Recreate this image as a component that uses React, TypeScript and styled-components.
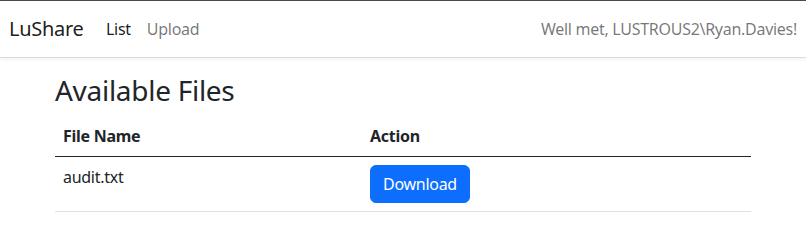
import React from "react";
import styled, { createGlobalStyle } from "styled-components";

const Global = createGlobalStyle`
  html, body { margin: 0; padding: 0; background: #fff; }
  body {
    font-family: "Noto Sans", "Open Sans", sans-serif;
    font-size: 16px;
    line-height: 1.5;
    color: #212529;
    letter-spacing: -0.28px;
    border-top: 1px solid #4a4a4a;
  }
  * { box-sizing: border-box; }
`;

const Navbar = styled.nav`
  display: flex;
  align-items: center;
  height: 57px;
  padding: 0 9px;
  border-bottom: 1px solid #dcdcdc;
  box-shadow: 0 2px 4px rgba(0, 0, 0, 0.05);
`;

const Brand = styled.a`
  width: 97px;
  font-size: 20px;
  color: rgba(0, 0, 0, 0.9);
  text-decoration: none;
`;

const NavLinks = styled.div`
  display: flex;
  gap: 16px;
  flex: 1;
`;

const NavLink = styled.a<{ $active?: boolean }>`
  font-size: 16px;
  color: ${(p) => (p.$active ? "rgba(0,0,0,0.9)" : "rgba(0,0,0,0.55)")};
  text-decoration: none;
`;

const Greeting = styled.span`
  color: rgba(0, 0, 0, 0.55);
  font-size: 16px;
`;

const Container = styled.main`
  width: 696px;
  margin: 16px 0 0 55px;
`;

const Heading = styled.h2`
  margin: 0 0 8px;
  font-weight: 400;
  font-size: 28px;
  line-height: 1.2;
`;

const Table = styled.table`
  width: 100%;
  border-collapse: collapse;
`;

const Th = styled.th<{ $w?: number }>`
  text-align: left;
  font-weight: 700;
  padding: 8px;
  border-bottom: 1px solid #212529;
  width: ${(p) => (p.$w ? `${p.$w}px` : "auto")};
`;

const Td = styled.td`
  padding: 8px;
  vertical-align: top;
  border-bottom: 1px solid #dee2e6;
`;

const Button = styled.button`
  font-family: inherit;
  font-size: 16px;
  letter-spacing: -0.28px;
  line-height: 1.5;
  color: #fff;
  background: #0d6efd;
  border: 1px solid #0d6efd;
  border-radius: 6px;
  padding: 6px 12px;
  cursor: pointer;
`;

export default function App() {
  return (
    <>
      <Global />
      <Navbar>
        <Brand href="#">LuShare</Brand>
        <NavLinks>
          <NavLink $active href="#">List</NavLink>
          <NavLink href="#">Upload</NavLink>
        </NavLinks>
        <Greeting>Well met, LUSTROUS2\Ryan.Davies!</Greeting>
      </Navbar>
      <Container>
        <Heading>Available Files</Heading>
        <Table>
          <thead>
            <tr>
              <Th $w={307}>File Name</Th>
              <Th>Action</Th>
            </tr>
          </thead>
          <tbody>
            <tr>
              <Td>audit.txt</Td>
              <Td>
                <Button>Download</Button>
              </Td>
            </tr>
          </tbody>
        </Table>
      </Container>
    </>
  );
}
